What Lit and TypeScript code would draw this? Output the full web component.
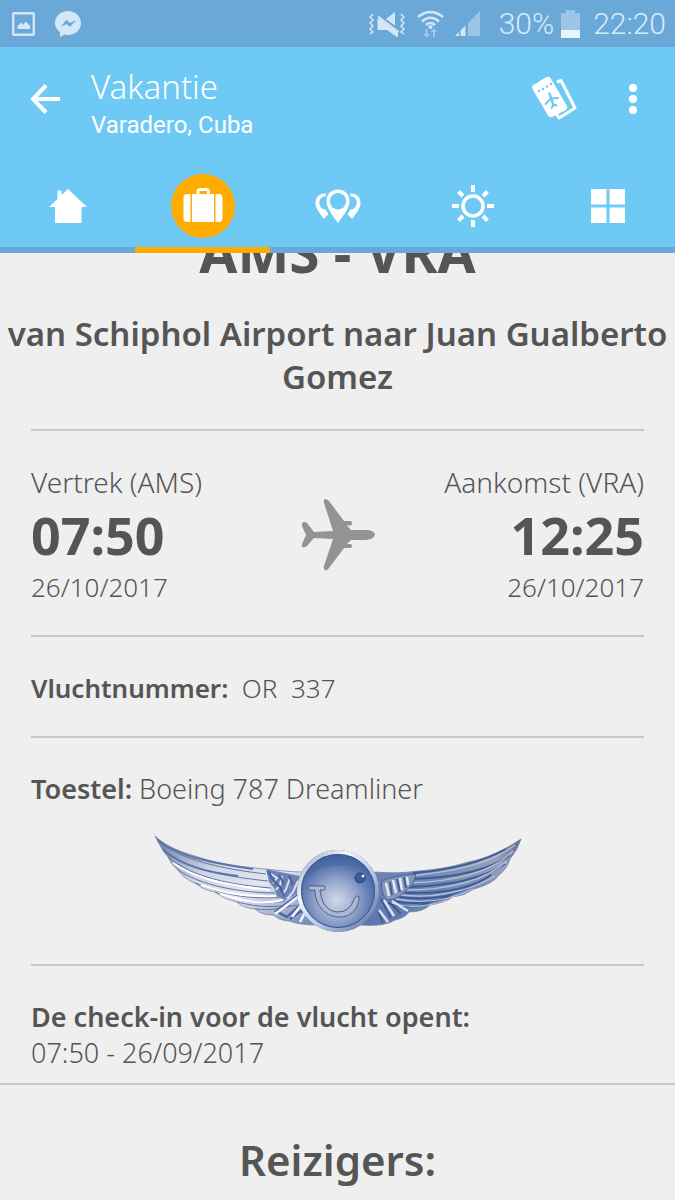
import { LitElement, html, css, svg } from "lit";
import { customElement, state } from "lit/decorators.js";
import { classMap } from "lit/directives/class-map.js";

const home = svg`<svg width="38" height="36" viewBox="0 0 38 36" fill="#fff"><path d="M19 1 37.5 18.500V19H32.500V35H6V19H.5V18.500L8.500 11V2.500H12.500V7Z"/></svg>`;

const suitcase = svg`<svg width="40" height="38" viewBox="0 0 40 38" fill="#fff"><path d="M9 7H31V35H9Z"/><path d="M7.500 7V35H4.500Q.5 35 .5 31V11Q.5 7 4.500 7ZM32.500 7V35H35.500Q39.500 35 39.500 31V11Q39.500 7 35.500 7Z"/><path d="M15 8V4.500Q15 2.500 17 2.500H23.500Q25.500 2.500 25.500 4.500V8" fill="none" stroke="#fff" stroke-width="3"/></svg>`;

const pins = svg`<svg width="46" height="36" viewBox="0 0 46 36"><g fill="#fff" fill-rule="evenodd"><path d="M23 1.500C30 1.500 34.500 6.500 34.500 13C34.500 21 27 29 23 35C19 29 11.500 21 11.500 13C11.500 6.500 16 1.500 23 1.500ZM23 5A8 8 0 0 0 15.500 16Q17 20 19.500 20.500Q23 22.500 26.500 20.500Q29 20 30.500 16A8 8 0 0 0 23 5Z"/><path d="M11 5.500C4.500 5 .5 9 .5 15C.5 20.500 5 25.500 9 31L13.500 26L10.500 21.500Q7 21.500 5 18Q2.500 11 8.500 8.500L10.500 8.500Z"/><path d="M35 5.500C41.500 5 45.500 9 45.500 15C45.500 20.500 41 25.500 37 31L32.500 26L35.500 21.500Q39 21.500 41 18Q43.500 11 37.500 8.500L35.500 8.500Z"/></g></svg>`;

const sun = svg`<svg width="42" height="42" viewBox="0 0 42 42" fill="none" stroke="#fff" stroke-width="4"><circle cx="21" cy="21" r="10" stroke-width="3.500"/><path d="M21 0V7M21 35V42M0 21H7M35 21H42M6.500 6.500 11 11M31 31 35.500 35.500M6.500 35.500 11 31M31 11 35.500 6.500"/></svg>`;

const grid = svg`<svg width="34" height="34" viewBox="0 0 34 34" fill="#fff"><path d="M0 0H15.500V15.500H0ZM18.500 0H34V15.500H18.500ZM0 18.500H15.500V34H0ZM18.500 18.500H34V34H18.500Z"/></svg>`;

const tabs = [
  { label: "Home", icon: home },
  { label: "Reis", icon: suitcase },
  { label: "Bestemming", icon: pins },
  { label: "Weer", icon: sun },
  { label: "Meer", icon: grid },
];

@customElement("status-bar")
class StatusBar extends LitElement {
  static styles = css`
    :host { display: flex; align-items: center; justify-content: space-between; height: 47px; padding: 0 9px 0 12px; background: #6aa8d8; color: #d9ebf9; font: 300 30px/47px Roboto, sans-serif; }
    svg { display: block; flex: none; }
    .group { display: flex; align-items: center; }
    .left { gap: 20px; }
    .mute { margin-right: 12px; }
    .wifi { margin-right: 11px; }
    .signal { margin-right: 19px; }
    .battery { margin: 0 13px 0 7px; }
  `;
  render() {
    return html`
      <div class="group left">
        <svg width="23" height="24" viewBox="0 0 23 24"><rect x="1.200" y="1.200" width="20.600" height="21.600" rx="1" fill="none" stroke="#d3e7f6" stroke-width="2.400"/><path d="M5.500 17V14L9 10.500 11 12.500 14 9.500 18 14V17Z" fill="#d3e7f6"/></svg>
        <svg width="26" height="26" viewBox="0 0 26 26"><path fill="#d3e7f6" d="M13 0C20 0 26 5 26 12S20 24 13 24Q11 24 9.500 23.500L5 26V21C2 19 0 16 0 12 0 5 6 0 13 0Z"/><path fill="#6aa8d8" d="M5.500 16 11.500 9 15 12 21 9 15 16 11.500 13Z"/></svg>
      </div>
      <div class="group">
        <svg class="mute" width="36" height="26" viewBox="0 0 36 26"><path fill="#d3e7f6" d="M8.500 8 11 8 29 21.500V26H28L18 19H8.500ZM26 1V14.500L17 8Z"/><path d="M9 5.500 29.500 21" stroke="#d3e7f6" stroke-width="2"/><path d="M4 3 1 6 4 9 1 12 4 15 1 18 4 21 1 23M32 3 35 6 32 9 35 12 32 15 35 18 32 21 35 23" fill="none" stroke="#d3e7f6" stroke-width="1.500"/></svg>
        <svg class="wifi" width="27" height="28" viewBox="0 0 27 28"><path d="M1 7Q13.500-3 26 7M5 11.500Q13.500 4 22 11.500M9 15Q13.500 11 18 15" fill="none" stroke="#d3e7f6" stroke-width="2.600"/><circle cx="13.500" cy="17" r="2" fill="#d3e7f6"/><path d="M10.500 19V24H13.500L9.500 27.500 6 24H8.500V19ZM18 27V22H20.500L17 18.500 13.500 22H16V27Z" fill="#a3c9e8"/></svg>
        <svg class="signal" width="25" height="25" viewBox="0 0 25 25"><path d="M13 12 25 0V25H13Z" fill="#9dc5e5"/><path d="M0 25 4 21V25ZM5.500 19.500 10.500 14.500V25H5.500Z" fill="#d3e7f6"/></svg>
        <span>30%</span>
        <svg class="battery" width="19" height="28" viewBox="0 0 19 28"><path d="M5 0H14V3H19V28H0V3H5Z" fill="#9dc5e5"/><path d="M0 20H19V28H0Z" fill="#e8f3fb"/></svg>
        <span>22:20</span>
      </div>`;
  }
}

@customElement("wings-badge")
class WingsBadge extends LitElement {
  static styles = css`
    :host { display: block; }
    svg { display: block; margin: 0 auto; }
  `;
  render() {
    return html`<svg width="370" height="99" viewBox="0 0 370 99" role="img" aria-label="Dreamliner">
      <defs>
        <linearGradient id="lw" x1="0" y1="0" x2="1" y2="1"><stop offset="0" stop-color="#5f719a"/><stop offset=".35" stop-color="#cdd4e6"/><stop offset=".6" stop-color="#e3e6f0"/><stop offset="1" stop-color="#6b82b6"/></linearGradient>
        <linearGradient id="rw" x1="0" y1="1" x2="1" y2="0"><stop offset="0" stop-color="#5a76b1"/><stop offset=".5" stop-color="#7187b3"/><stop offset=".8" stop-color="#98a4b9"/><stop offset="1" stop-color="#586887"/></linearGradient>
        <radialGradient id="ball" cx=".48" cy=".62" r=".6"><stop offset="0" stop-color="#d2d8ea"/><stop offset=".35" stop-color="#a2b1d3"/><stop offset=".75" stop-color="#5b78b0"/><stop offset="1" stop-color="#3d5e9c"/></radialGradient>
        <linearGradient id="rim" x1="0" y1="0" x2="1" y2="1"><stop offset="0" stop-color="#8798bd"/><stop offset=".3" stop-color="#f4f6fc"/><stop offset=".6" stop-color="#b9c6e4"/><stop offset="1" stop-color="#56709f"/></linearGradient>
      </defs>
      <path d="M2 1C12 11 28 17 42 21C62 28 82 31 102 33C122 35 138 37 150 37L164 90Q146 90 136 86Q127 86 120 80Q108 80 102 74Q90 73 84 67Q72 65 62 57Q50 55 42 48Q31 44 25 35Q19 31 15 22Q10 17 2 1Z" fill="url(#lw)" stroke="#7c87a3" stroke-width=".8"/>
      <g fill="none" stroke="#66759a" stroke-width="1">
        <path d="M4 4C25 25 70 34 113 39M9 13C30 34 75 42 115 46M15 22C40 43 80 50 118 53M24 34C45 50 88 58 122 58M42 48C70 60 98 65 128 62M62 57C85 68 110 70 132 66M84 67C108 73 122 72 138 70M102 74C118 76 130 73 144 70"/>
      </g>
      <path d="M5 5C25 22 65 29 100 34M10 15C32 33 60 38 85 41" fill="none" stroke="#5c76aa" stroke-width="2"/>
      <path d="M20 28C45 46 82 51 117 55M48 50C75 60 100 62 123 61M67 59C96 69 112 69 130 65" fill="none" stroke="#fff" stroke-width="2"/>
      <path d="M113 34Q132 38 147 41V56L140 61 132 65 124 61 121 53 116 47Z" fill="#6b82b5"/>
      <path d="M118 39 124 43 120 48M129 41 127 50 123 55M137 43 133 54 129 60M145 46 140 57 134 64" fill="none" stroke="#d9e0f0" stroke-width="2"/>
      <path d="M115 36 121 46 127 52 131 61M126 40 131 49M136 41 140 50M147 58 137 66 123 76 134 82 147 70M137 84 148 76 157 80" fill="none" stroke="#49639a" stroke-width="2.200"/>
      <path d="M146 61 130 73 122 79M149 69 139 82M153 76 147 87" fill="none" stroke="#f1f4fb" stroke-width="2.500"/>
      <path d="M368 4C350 16 332 24 315 27C300 32 281 35 265 36Q246 39 222 37L207 90Q232 92 242 85Q252 83 256 77Q270 77 277 70Q294 67 299 62Q311 61 321 54Q340 49 346 40Q354 34 357 24Q364 16 368 4Z" fill="url(#rw)" stroke="#7585a5" stroke-width=".8"/>
      <g fill="none" stroke="#3a5b9b" stroke-width="2">
        <path d="M353 14C330 27 295 35 260 38M357 20C334 37 296 43 257 44M352 29C329 44 294 51 255 52M338 40C320 53 289 59 252 58M318 51C300 61 275 66 246 62M298 60C282 68 258 70 240 66M276 68C262 73 247 72 235 68"/>
      </g>
      <g fill="none" stroke="#b7c1d3" stroke-width="1.300">
        <path d="M362 10C334 31 295 37 258 41M360 16C336 40 296 47 255 48M354 26C330 47 292 55 252 55M342 41C315 57 280 64 248 60M320 54C295 66 268 69 243 64M294 65C271 73 254 73 238 68"/>
      </g>
      <path d="M229 46Q242 40 263 39Q261 51 251 57Q246 64 234 65Q227 58 229 46Z" fill="#8696ba" stroke="#4a6294"/>
      <path d="M233 48 236 61M240 45 243 58M247 43 249 55M254 42 255 50" fill="none" stroke="#e4eaf6" stroke-width="2.500"/>
      <path d="M237 47 239 60M244 44 247 57M251 42 253 53M228 64 238 83M236 67 248 79M225 76 230 88" fill="none" stroke="#3f5b92" stroke-width="1.800"/>
      <path d="M231 65 241 81M239 66 255 76M226 75 235 87" stroke="#d9e1f0" stroke-width="2.500"/>
      <circle cx="185" cy="56" r="41" fill="#54709f"/>
      <circle cx="185" cy="56" r="39" fill="url(#ball)" stroke="url(#rim)" stroke-width="4"/>
      <circle cx="185" cy="56" r="36.500" fill="none" stroke="#3c578c" stroke-width="1"/>
      <path d="M153 41C162 21 196 14 214 33C192 27 167 31 153 41Z" fill="#45669f" opacity=".45"/>
      <path d="M157 51H171Q174 53 171 55H167C168 67 174 77 185 77Q197 77 201 64Q204 59 206 62C206 75 196 83 185 82C171 81 162 69 162 55H157Q153 53 157 51Z" fill="#aab8d5" stroke="#4a5470" stroke-width=".9"/>
      <circle cx="207" cy="43" r="5" fill="#3a5c99" stroke="#243f75"/><circle cx="210" cy="41" r="1.500" fill="#e6efff"/>
    </svg>`;
  }
}

@customElement("app-root")
class AppRoot extends LitElement {
  @state() private active = 1;

  static styles = css`
    :host { display: block; min-height: 100vh; background: #efefef; color: #555; font: 350 27px/36px "Noto Sans", sans-serif; overflow: hidden; }
    * { box-sizing: border-box; }
    svg { display: block; flex: none; }
    button { display: flex; align-items: center; justify-content: center; padding: 0; border: 0; background: none; cursor: pointer; }
    h1, h2, h3, p { margin: 0; font-size: inherit; font-weight: inherit; }
    .header { position: relative; z-index: 1; background: #6ecaf4; }
    .toolbar { display: flex; align-items: center; height: 112px; padding: 0 32px 8px 30px; }
    .titles { flex: 1; padding-top: 12px; margin-left: 30px; color: #fff; }
    .title { font-size: 33px; line-height: 40px; font-weight: 350; }
    .subtitle { font: 400 24px/36px Roboto, sans-serif; }
    .more { width: 20px; margin-left: 46px; }
    .tabs { display: flex; height: 94px; }
    .tab { flex: 1; padding-top: 6px; border-bottom: 6px solid #6aa8d8; }
    .tab.active { border-color: #ffab00; }
    .disc { display: flex; align-items: center; justify-content: center; width: 64px; height: 64px; border-radius: 50%; }
    .active .disc { background: #ffab00; }
    .route { margin-top: -33px; text-align: center; font-size: 55px; line-height: 64px; font-weight: 700; }
    .airports { margin-top: 28px; padding-bottom: 31px; text-align: center; font-size: 33px; line-height: 43px; font-weight: 600; }
    .section { margin: 0 31px; padding: 33px 0 30px; border-top: 2px solid #c8c8c8; }
    .flight { display: grid; grid-template-columns: 1fr auto 1fr; align-items: center; }
    .arrival { text-align: right; }
    .place { font-size: 28px; }
    .time { font-size: 52px; line-height: 69px; font-weight: 700; }
    .date, .number { font-size: 26px; }
    .label { font-weight: 600; }
    .logo { margin-top: 28px; }
    .checkin { padding-bottom: 12px; }
    .travellers { padding-top: 47px; border-top: 2px solid #c8c8c8; text-align: center; font-size: 42px; line-height: 56px; font-weight: 600; }
  `;

  render() {
    return html`
      <header class="header">
        <status-bar></status-bar>
        <div class="toolbar">
          <button aria-label="Terug"><svg width="31" height="30" viewBox="0 0 31 30" fill="none" stroke="#fff" stroke-width="4"><path d="M16 1.500 3 15 16 28.500M3 15H30"/></svg></button>
          <div class="titles"><h1 class="title">Vakantie</h1><p class="subtitle">Varadero, Cuba</p></div>
          <button aria-label="Tickets"><svg width="46" height="46" viewBox="0 0 46 46"><path d="M26 6 30 4.500 44 32 28 42 25.500 38" fill="none" stroke="#fff" stroke-width="3" stroke-linejoin="round"/><path d="M3 8.500 15.500 1Q18 0 19.500 2L36 30Q37 32.500 35 34L21 41Q18.500 42 17 39.500L1.500 13Q0 10 3 8.500Z" fill="#fff"/><g fill="none" stroke="#6ecaf4" stroke-linecap="round"><path d="M18.500 17.500 22.500 29.500" stroke-width="2.400"/><path d="M27 22 20 22.500 14.500 28M25.500 29.500 22.500 28.500 20.500 32" stroke-width="2"/></g><g fill="#6ecaf4"><circle cx="8" cy="15" r="1.200"/><circle cx="12" cy="13" r="1.200"/><circle cx="16" cy="10.500" r="1.200"/><circle cx="20" cy="8" r="1.200"/></g></svg></button>
          <button class="more" aria-label="Meer opties"><svg width="10" height="32" viewBox="0 0 10 32" fill="#fff"><circle cx="5" cy="5" r="4"/><circle cx="5" cy="16" r="4"/><circle cx="5" cy="27" r="4"/></svg></button>
        </div>
        <nav class="tabs">
          ${tabs.map((t, i) => html`<button class=${classMap({ tab: true, active: i === this.active })} aria-label=${t.label} @click=${() => (this.active = i)}><span class="disc">${t.icon}</span></button>`)}
        </nav>
      </header>
      <main>
        <h2 class="route">AMS - VRA</h2>
        <p class="airports">van Schiphol Airport naar Juan Gualberto Gomez</p>
        <section class="section flight">
          <div><p class="place">Vertrek (AMS)</p><p class="time">07:50</p><p class="date">26/10/2017</p></div>
          <svg width="74" height="72" viewBox="0 0 74 72" fill="#939393"><path d="M13 33 32 32 23 4Q22 0 25 0L28 2 43 22H50Q52 24 50 26.500H46L50 31H65Q73 31 74 35.500Q73 40 65 41H50L46 45H50Q52 47 50 49H43L28 69Q26 72 24 71Q22 70 23 67L32 40 13 39 6 47Q4 49 1 48V45L5 36 1 27V24Q4 22 6 24Z"/></svg>
          <div class="arrival"><p class="place">Aankomst (VRA)</p><p class="time">12:25</p><p class="date">26/10/2017</p></div>
        </section>
        <section class="section number"><span class="label">Vluchtnummer:</span>&nbsp; OR&nbsp; 337</section>
        <section class="section"><p><span class="label">Toestel:</span> Boeing 787 Dreamliner</p><wings-badge class="logo"></wings-badge></section>
        <section class="section checkin"><h3 class="label">De check-in voor de vlucht opent:</h3><p>07:50 - 26/09/2017</p></section>
        <h2 class="travellers">Reizigers:</h2>
      </main>`;
  }
}
